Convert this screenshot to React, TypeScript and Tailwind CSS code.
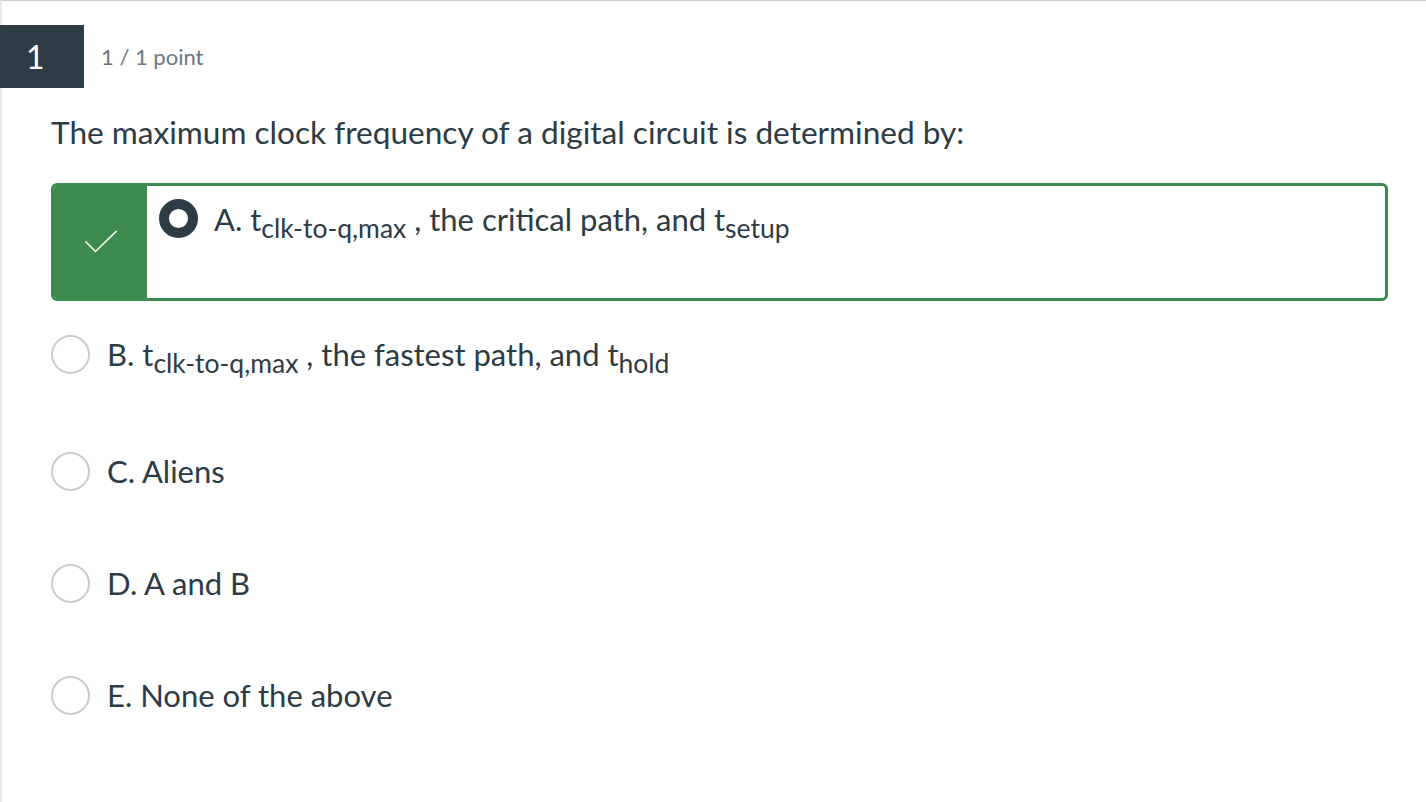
import React from "react";

const options = [
  { id: "B", body: <>B. t<sub className="text-[26.5px]">clk-to-q,max</sub> , the fastest path, and t<sub className="text-[26.5px]">hold</sub></>, mt: "mt-[33px]" },
  { id: "C", body: <>C. Aliens</>, mt: "mt-[77px]" },
  { id: "D", body: <>D. A and B</>, mt: "mt-[72px]" },
  { id: "E", body: <>E. None of the above</>, mt: "mt-[72px]" },
];

function EmptyRadio() {
  return <span className="block w-[39px] h-[39px] shrink-0 rounded-full border-2 border-[#c7cdd1] bg-white" />;
}

export default function App() {
  return (
    <div
      className="min-h-[802px] w-full bg-white border-t border-[#c7cdd1] border-l-2 border-l-[#e8eaec] text-[#2d3b45]"
      style={{ fontFamily: "Lato, 'Open Sans', sans-serif" }}
    >
      {/* header */}
      <div className="mt-[24px] -ml-[2px] flex items-center h-[63px]">
        <div className="w-[84px] h-full bg-[#2d3b45] text-white text-[32px] flex items-center pl-[26px]">
          1
        </div>
        <div className="ml-[17px] text-[22px] text-[#6b7780]">1 / 1 point</div>
      </div>

      <div className="pl-[49px] pr-[38px]">
        <h2 className="mt-[24px] text-[31.6px] leading-[40px]">
          The maximum clock frequency of a digital circuit is determined by:
        </h2>

        {/* correct answer */}
        <div className="mt-[31px] h-[118px] flex rounded-[6px] border-[3px] border-[#3d8a50] overflow-hidden">
          <div className="w-[93px] bg-[#3d8a50] flex items-center justify-center">
            <svg width="34" height="24" viewBox="0 0 34 24" fill="none">
              <path d="M1.5 11.5 L11.5 21.5 L32.5 1" stroke="white" strokeWidth="1.6" />
            </svg>
          </div>
          <div className="flex items-start pl-[12px] pt-[13px]">
            <span className="block w-[39px] h-[39px] shrink-0 rounded-full border-[10px] border-[#2d3b45] bg-white" />
            <div className="ml-[16px] text-[31px] leading-[40px]">
              A. t<sub className="text-[26.5px]">clk-to-q,max</sub> , the critical path, and t<sub className="text-[26.5px]">setup</sub>
            </div>
          </div>
        </div>

        {options.map((o) => (
          <div key={o.id} className={`${o.mt} flex items-center`}>
            <EmptyRadio />
            <div className="ml-[17px] text-[31px] leading-[40px]">{o.body}</div>
          </div>
        ))}
      </div>
    </div>
  );
}
